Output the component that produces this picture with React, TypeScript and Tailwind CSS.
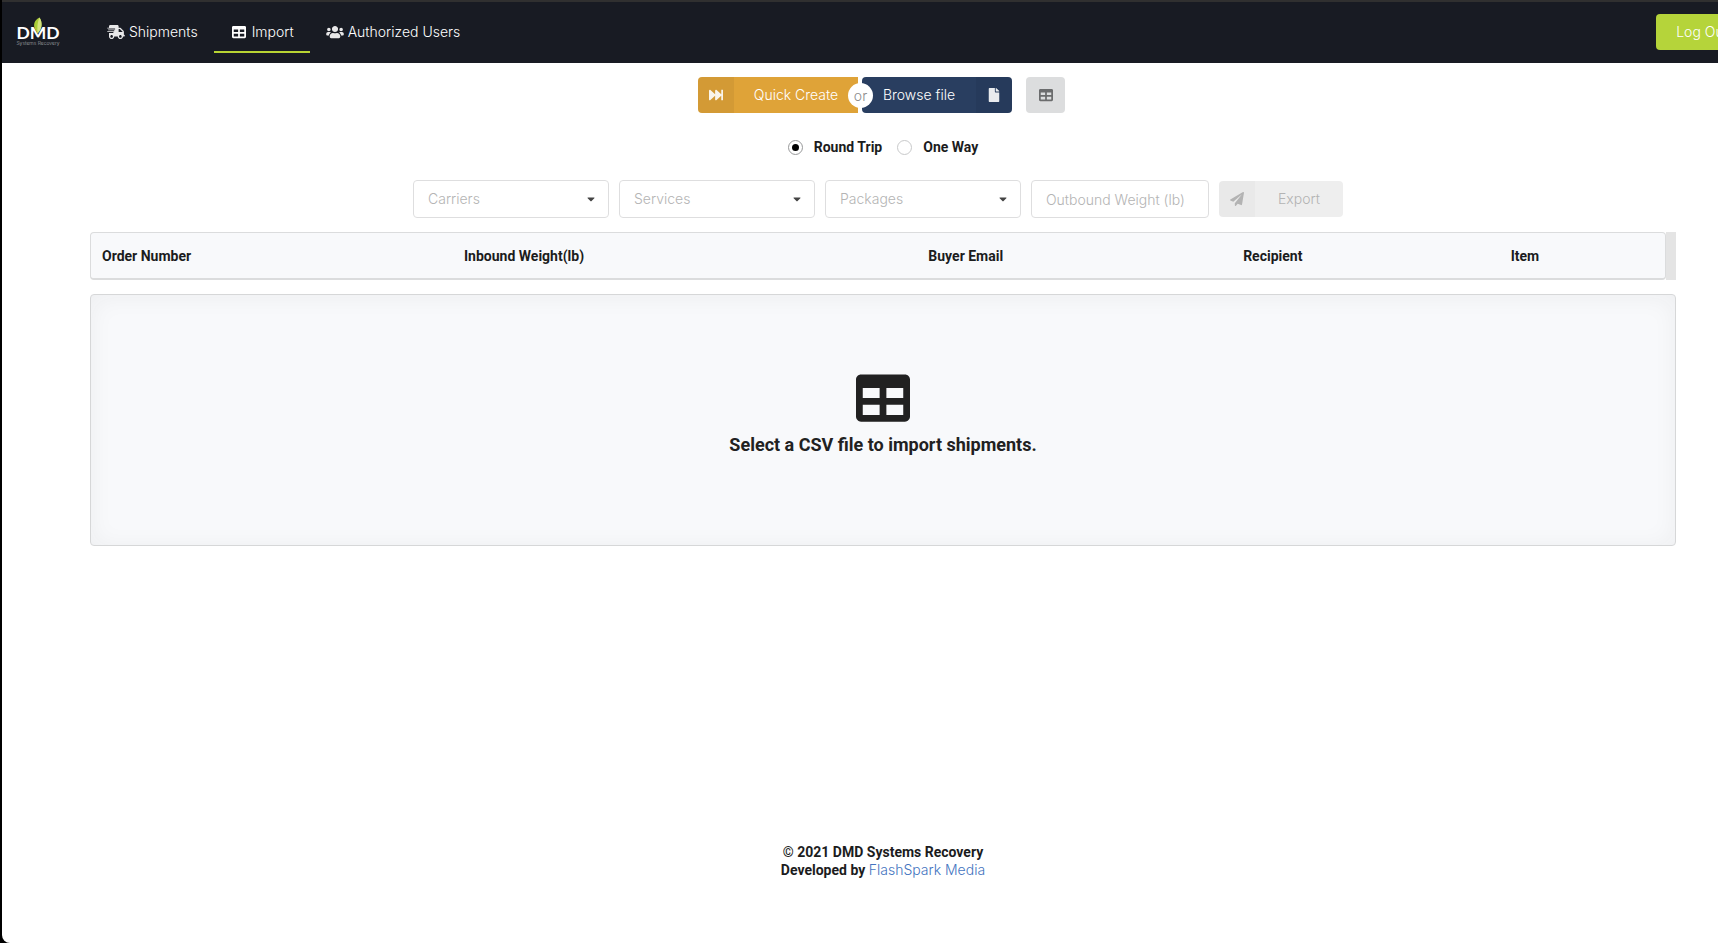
import React from "react";
import {
  FaCaretDown,
  FaFastForward,
  FaFile,
  FaPaperPlane,
  FaShippingFast,
  FaTable,
  FaUsers,
} from "react-icons/fa";

function Logo() {
  return (
    <svg width="44" height="32" viewBox="0 0 44 32" role="img" aria-label="DMD Systems Recovery">
      <path d="M23.500 0.500C18.500 3 17 7.500 18.800 11.500L21.600 16.500C26.200 11.500 26.800 6 23.500 0.500Z" fill="#a9cc35" />
      <path d="M23.500 0.500C21.500 5 21 9.500 21.600 16.500C26.200 11.500 26.800 6 23.500 0.500Z" fill="#d3e37c" />
      <text
        x="22"
        y="22"
        textAnchor="middle"
        fill="#ffffff"
        fontFamily="Lato, sans-serif"
        fontWeight="700"
        fontSize="17.5"
      >
        DMD
      </text>
      <text
        x="22"
        y="28"
        textAnchor="middle"
        fill="#a9abae"
        fontFamily="Inter, sans-serif"
        fontSize="5"
      >
        Systems Recovery
      </text>
    </svg>
  );
}

const navItems = [
  { label: "Shipments", icon: FaShippingFast, active: false },
  { label: "Import", icon: FaTable, active: true },
  { label: "Authorized Users", icon: FaUsers, active: false },
];

function Header() {
  return (
    <header className="flex h-[61px] items-center bg-[#181b23] pr-4 pl-[14px]">
      <a href="#home" className="block">
        <Logo />
      </a>
      <nav className="ml-[31px] flex self-stretch pt-2 pb-[10px]">
        {navItems.map(({ label, icon: Icon, active }) => (
          <a
            key={label}
            href={"#" + label.toLowerCase().replace(" ", "-")}
            aria-current={active ? "page" : undefined}
            className={
              active
                ? "flex items-center gap-1 border-y-2 border-t-transparent border-b-[#b8d433] px-4 text-white"
                : "flex items-center gap-1 border-y-2 border-transparent px-4 text-white"
            }
          >
            <Icon className={active ? "h-[14px] w-[18px]" : "h-[14px] w-[18px] opacity-90"} />
            {label}
          </a>
        ))}
      </nav>
      <button type="button" className="mb-px ml-auto h-9 w-[92px] rounded bg-[#b5d43a] text-white">
        Log Out
      </button>
    </header>
  );
}

function ImportActions() {
  return (
    <div className="flex justify-center gap-[14px] pr-[3px]">
      <div className="relative flex gap-1">
        <button type="button" className="flex h-9 w-40 items-center rounded-l bg-[#dfa338] text-white">
          <span className="flex h-9 w-9 items-center justify-center rounded-l bg-black/5">
            <FaFastForward className="size-[14px] opacity-90" />
          </span>
          <span className="flex-1 text-center">Quick Create</span>
        </button>
        <span className="absolute top-[6px] left-[150px] flex size-[25px] items-center justify-center rounded-full bg-white text-[#8c8c8c]">
          or
        </span>
        <button type="button" className="flex h-9 w-[150px] items-center rounded bg-[#293e60] text-white">
          <span className="flex-1 text-center">Browse file</span>
          <span className="flex h-9 w-9 items-center justify-center rounded-r bg-black/5">
            <FaFile className="size-[14px] opacity-90" />
          </span>
        </button>
      </div>
      <button
        type="button"
        aria-label="View table"
        className="flex h-9 w-[39px] items-center justify-center rounded bg-[#dcddde] text-[#6b6c6d]"
      >
        <FaTable className="size-[14px]" />
      </button>
    </div>
  );
}

function TripType() {
  const options = ["Round Trip", "One Way"];
  return (
    <div className="mt-[25px] flex justify-center gap-[15px]">
      {options.map((option, i) => (
        <label key={option} className="flex items-center gap-[11px] font-[Roboto,sans-serif] font-bold text-[#1b1c1d]">
          <input
            type="radio"
            name="trip"
            defaultChecked={i === 0}
            className="size-[15px] appearance-none rounded-full border border-[#c8c9ca] bg-white p-[3px] checked:border-[#98999a] checked:bg-black checked:bg-clip-content"
          />
          {option}
        </label>
      ))}
    </div>
  );
}

function Filters() {
  return (
    <form className="mt-6 flex items-center justify-center gap-[10px] pr-[10px]">
      {["Carriers", "Services", "Packages"].map((name) => (
        <div key={name} className="relative w-[196px]">
          <select
            aria-label={name}
            className="h-[38px] w-full appearance-none rounded border border-[#dededf] bg-white px-[14px] text-[#b4b4b4]"
          >
            <option>{name}</option>
          </select>
          <FaCaretDown className="pointer-events-none absolute top-[13px] right-3 size-3 text-[#444444]" />
        </div>
      ))}
      <input
        type="text"
        aria-label="Outbound Weight (lb)"
        placeholder="Outbound Weight (lb)"
        className="h-[38px] w-[178px] rounded border border-[#dededf] bg-white px-[14px] placeholder:text-[#b4b4b4]"
      />
      <button type="button" disabled className="flex h-9 w-[124px] items-center rounded bg-[#eeeeee] text-[#b3b3b3]">
        <span className="flex h-9 w-9 items-center justify-center rounded-l bg-black/2">
          <FaPaperPlane className="size-[14px]" />
        </span>
        <span className="flex-1 text-center">Export</span>
      </button>
    </form>
  );
}

const columns = [
  { label: "Order Number", width: "w-[23%]" },
  { label: "Inbound Weight(lb)", width: "w-[29.5%]" },
  { label: "Buyer Email", width: "w-[20%]" },
  { label: "Recipient", width: "w-[17%]" },
  { label: "Item", width: "w-[10.5%]" },
];

function ShipmentTable() {
  return (
    <div className="mt-[14px] flex">
      <div className="h-12 flex-1 overflow-hidden rounded border border-b-2 border-[#dbdcdd] bg-[#f8f9fb]">
        <table className="h-full w-full table-fixed">
          <colgroup>
            {columns.map(({ label, width }) => (
              <col key={label} className={width} />
            ))}
          </colgroup>
          <thead>
            <tr>
              {columns.map(({ label }) => (
                <th
                  key={label}
                  scope="col"
                  className="px-[11px] text-left font-[Roboto,sans-serif] font-bold text-[#1b1c1d]"
                >
                  {label}
                </th>
              ))}
            </tr>
          </thead>
        </table>
      </div>
      <div className="w-[10px] bg-[#e4e4e4]" />
    </div>
  );
}

export default function App() {
  return (
    <div className="flex min-h-screen overflow-hidden bg-black font-[Inter,sans-serif] text-[14px] leading-[18px] font-light">
      <div className="ml-[2px] flex flex-1 flex-col overflow-hidden rounded-bl-lg border-t-2 border-[#303030] bg-white">
        <div className="flex w-[calc(100%+46px)] flex-1 flex-col">
          <Header />
          <main className="px-[88px] pt-[14px]">
            <ImportActions />
            <TripType />
            <Filters />
            <ShipmentTable />
            <section className="mt-[14px] flex h-[252px] flex-col items-center justify-center rounded border border-[#d6d7d8] bg-[#f8f9fb] pb-3 text-[#212121] shadow-[inset_0_2px_25px_0_rgba(34,36,38,0.05)]">
              <FaTable className="size-[54px]" />
              <h1 className="mt-2 font-[Roboto,sans-serif] text-[18px] leading-6 font-bold">
                Select a CSV file to import shipments.
              </h1>
            </section>
          </main>
          <footer className="mt-auto pb-16 text-center font-[Roboto,sans-serif] font-bold text-[#1b1c1d]">
            <p>© 2021 DMD Systems Recovery</p>
            <p>
              Developed by{" "}
              <a href="#flashspark" className="font-[Inter,sans-serif] font-light text-[#4474c0]">
                FlashSpark Media
              </a>
            </p>
          </footer>
        </div>
      </div>
    </div>
  );
}
